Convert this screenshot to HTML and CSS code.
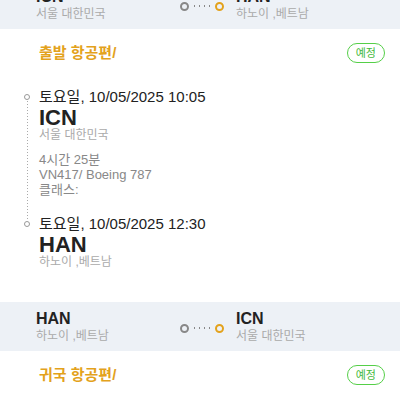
FILE: index.html
```html
<!DOCTYPE html>
<html lang="ko">
<head>
    <meta charset="UTF-8">
    <meta name="viewport" content="width=device-width, initial-scale=1.0">
    <title>항공편 정보</title>
    <link rel="stylesheet" href="styles.css">
</head>
<body>
    <div class="route route-top">
        <div class="route-point">
            <div class="code">ICN</div>
            <div class="city">서울 대한민국</div>
        </div>
        <div class="route-icon">
            <span class="dot-from"></span>
            <span class="dots"></span>
            <span class="dot-to"></span>
        </div>
        <div class="route-point">
            <div class="code">HAN</div>
            <div class="city">하노이 ,베트남</div>
        </div>
    </div>

    <section class="flight">
        <div class="flight-head">
            <h2>출발 항공편/</h2>
            <span class="badge">예정</span>
        </div>
        <div class="timeline">
            <span class="rail-dot"></span>
            <div class="date">토요일, 10/05/2025 10:05</div>
            <span class="rail-line"></span>
            <div class="stop">
                <div class="stop-code">ICN</div>
                <div class="stop-city">서울 대한민국</div>
                <div class="details">
                    <p>4시간 25분</p>
                    <p>VN417/ Boeing 787</p>
                    <p>클래스:</p>
                </div>
            </div>
            <span class="rail-dot"></span>
            <div class="date">토요일, 10/05/2025 12:30</div>
            <span></span>
            <div class="stop">
                <div class="stop-code">HAN</div>
                <div class="stop-city">하노이 ,베트남</div>
            </div>
        </div>
    </section>

    <div class="route">
        <div class="route-point">
            <div class="code">HAN</div>
            <div class="city">하노이 ,베트남</div>
        </div>
        <div class="route-icon">
            <span class="dot-from"></span>
            <span class="dots"></span>
            <span class="dot-to"></span>
        </div>
        <div class="route-point">
            <div class="code">ICN</div>
            <div class="city">서울 대한민국</div>
        </div>
    </div>

    <section class="flight">
        <div class="flight-head">
            <h2>귀국 항공편/</h2>
            <span class="badge">예정</span>
        </div>
    </section>
</body>
</html>
```

FILE: styles.css
```css
body {
    font-family: "Liberation Sans", "Noto Sans CJK KR", sans-serif;
    margin: 0;
    padding: 0;
    background-color: #fff;
    color: #222;
}
.route {
    background-color: #edf1f6;
    display: grid;
    grid-template-columns: 144px 56px 1fr;
    align-items: center;
    padding: 8px 0 7px 36px;
    height: 34px;
}
.route-top {
    margin-top: -20px;
}
.code {
    font-size: 16px;
    font-weight: bold;
    line-height: 18px;
    color: #222;
}
.city {
    font-size: 12px;
    line-height: 16px;
    color: #aaa;
}
.route-icon {
    display: flex;
    align-items: center;
    margin-top: 2px;
}
.dot-from,
.dot-to {
    width: 5px;
    height: 5px;
    border-radius: 50%;
    border: 2px solid #888;
}
.dot-to {
    border-color: #e3a21c;
}
.dots {
    width: 20px;
    height: 2px;
    margin: 0 3px;
    background-image: radial-gradient(circle, #888 0.8px, transparent 1px);
    background-size: 5px 2px;
}
.flight {
    padding: 13px 15px 0 21px;
}
.flight-head {
    display: flex;
    justify-content: space-between;
    align-items: center;
    padding-left: 18px;
}
.flight-head h2 {
    margin: 0;
    font-size: 15px;
    line-height: 22px;
    font-weight: bold;
    color: #e3a21c;
}
.badge {
    font-size: 11px;
    line-height: 18px;
    padding: 0 8px;
    border: 1.5px solid #55cf48;
    border-radius: 11px;
    color: #43b83a;
}
.timeline {
    display: grid;
    grid-template-columns: 12px 1fr;
    column-gap: 6px;
    margin-top: 23px;
    padding-bottom: 33px;
}
.rail-dot {
    justify-self: center;
    align-self: center;
    width: 4px;
    height: 4px;
    border-radius: 50%;
    border: 1.3px solid #999;
}
.rail-line {
    justify-self: center;
    width: 1px;
    margin: -6px 0;
    background-image: linear-gradient(#aaa 50%, transparent 50%);
    background-size: 1px 3px;
}
.date {
    font-size: 15px;
    line-height: 20px;
    color: #222;
}
.stop-code {
    font-size: 22px;
    font-weight: bold;
    line-height: 21px;
    color: #222;
}
.stop-city {
    font-size: 12px;
    line-height: 14px;
    color: #aaa;
}
.details {
    margin-top: 10px;
    margin-bottom: 17px;
    color: #888;
    font-size: 13px;
    line-height: 15px;
}
.details p {
    margin: 0;
}
```
